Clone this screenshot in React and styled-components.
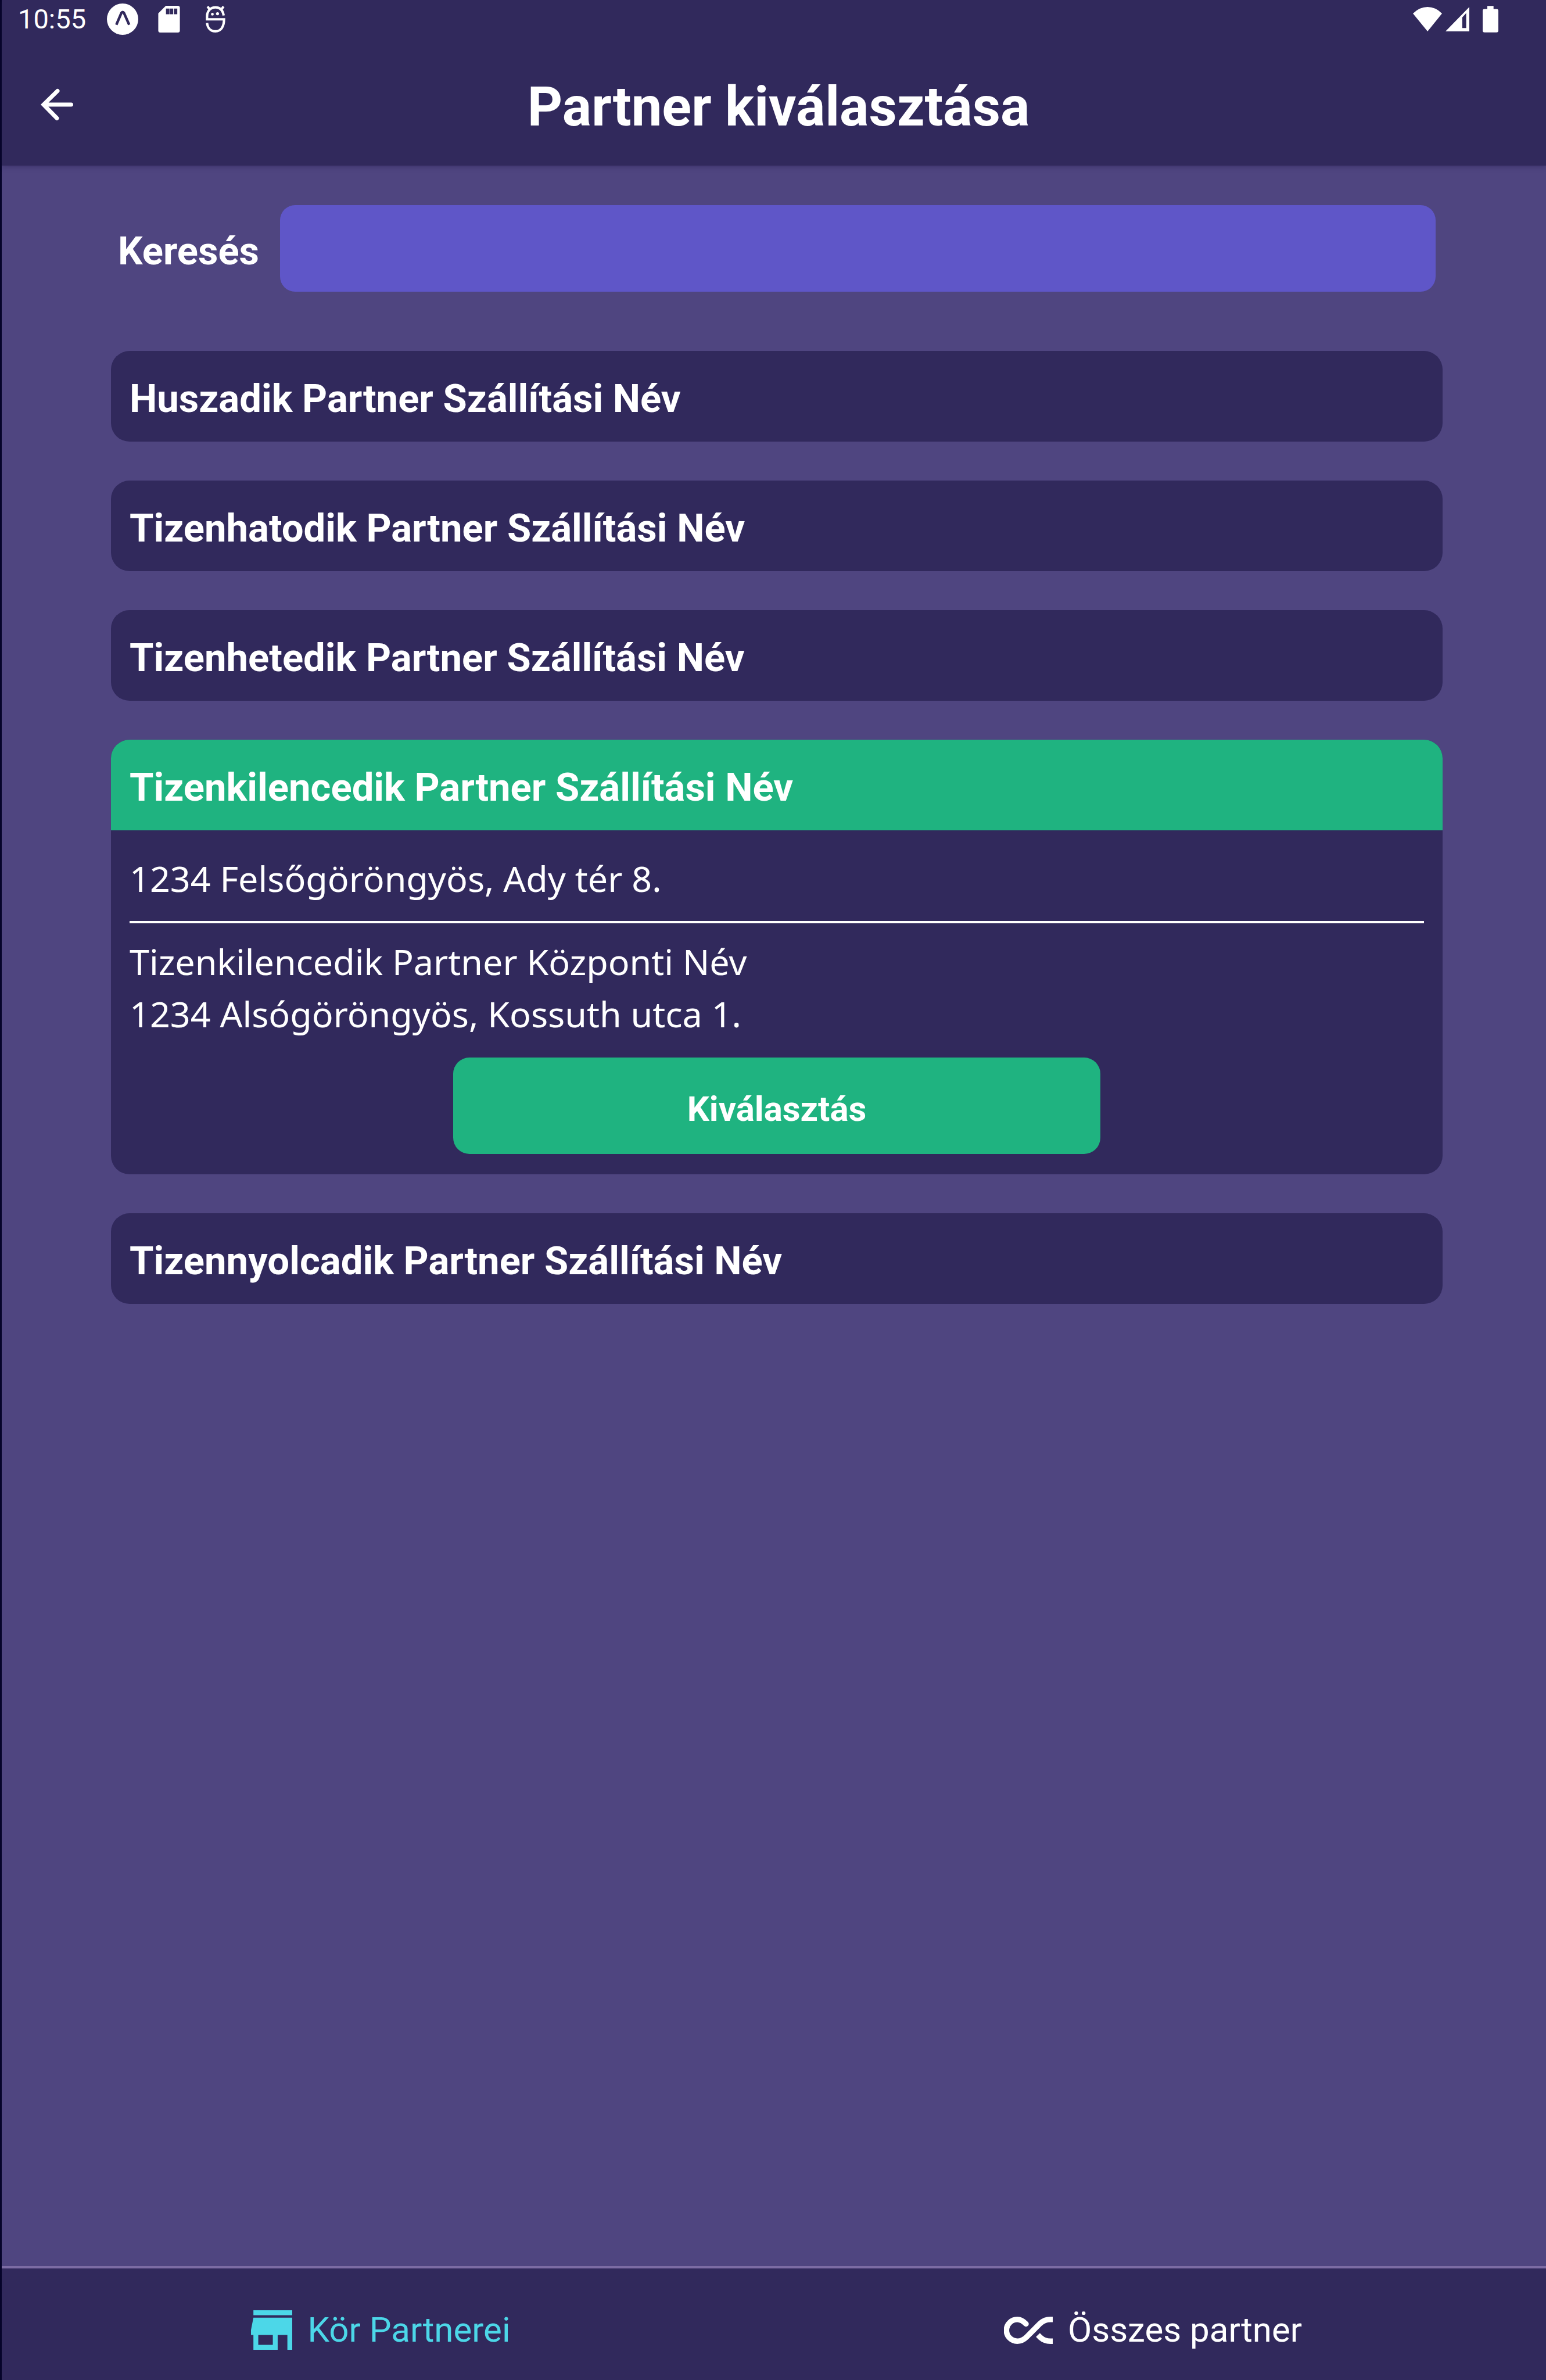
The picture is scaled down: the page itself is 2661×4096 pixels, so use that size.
import React, { useState } from 'react';
import styled, { createGlobalStyle } from 'styled-components';

const color = {
  page: '#4f4580',
  panel: '#31295c',
  field: '#5f56c8',
  green: '#1fb380',
  cyan: '#4cd7e8',
  line: '#7c6ca4',
  edge: '#06042a',
  text: '#ffffff',
};

const GlobalStyle = createGlobalStyle`
  *, *::before, *::after { box-sizing: border-box; }
  body { margin: 0; background: ${color.page}; }
  button, input { font: inherit; color: inherit; border: 0; margin: 0; padding: 0; background: none; }
`;

const Screen = styled.div`
  display: flex;
  flex-direction: column;
  min-height: 100vh;
  border-left: 3px solid ${color.edge};
  background: ${color.page};
  color: ${color.text};
  font-family: Roboto, "Liberation Sans", sans-serif;
`;

const Top = styled.header`
  background: ${color.panel};
  box-shadow: 0 2px 8px rgba(30, 20, 70, 0.35);
`;

const StatusBar = styled.div`
  display: flex;
  justify-content: space-between;
  height: 74px;
  padding: 0 82px 8px 28px;
`;

const StatusGroup = styled.div`
  display: flex;
  align-items: center;
  gap: ${(p) => p.$gap}px;
`;

const Clock = styled.time`
  margin-right: 10px;
  font-size: 47px;
  line-height: 56px;
`;

const AppBar = styled.div`
  display: grid;
  grid-template-columns: 1fr auto 1fr;
  align-items: center;
  height: 211px;
  padding: 0 46px 0 62px;
`;

const BackButton = styled.button`
  display: flex;
  justify-self: start;
  cursor: pointer;
`;

const Title = styled.h1`
  margin: 0;
  padding-top: 8px;
  font-size: 94px;
  font-weight: 700;
  line-height: 110px;
`;

const Content = styled.main`
  flex: 1;
  padding: 68px 178px 68px 188px;
`;

const SearchRow = styled.form`
  display: flex;
  align-items: center;
  gap: 36px;
  padding: 0 12px;
  margin-bottom: 102px;
`;

const SearchLabel = styled.label`
  padding-top: 8px;
  font-size: 67px;
  font-weight: 700;
  line-height: 78px;
`;

const SearchInput = styled.input`
  flex: 1;
  min-width: 0;
  height: 149px;
  padding: 0 32px;
  border-radius: 26px;
  background: ${color.field};
  font-size: 60px;
`;

const PartnerList = styled.ul`
  display: flex;
  flex-direction: column;
  gap: 67px;
  margin: 0;
  padding: 0;
  list-style: none;
`;

const PartnerCard = styled.li`
  overflow: hidden;
  border-radius: 32px;
  background: ${color.panel};
`;

const PartnerName = styled.button`
  display: block;
  width: 100%;
  padding: 43px 32px 35px;
  background: ${(p) => (p.$open ? color.green : 'transparent')};
  font-size: 67px;
  font-weight: 700;
  line-height: 78px;
  text-align: left;
  cursor: pointer;
`;

const PartnerDetails = styled.div`
  padding: 38px 32px 35px;
`;

const DetailLine = styled.p`
  margin: 0;
  font-family: "Noto Sans", "DejaVu Sans", sans-serif;
  font-size: 61px;
  line-height: 90px;
`;

const Divider = styled.hr`
  height: 4px;
  margin: 28px 0 21px;
  border: 0;
  background: ${color.text};
`;

const SelectButton = styled.button`
  display: block;
  width: 50%;
  margin: 30px auto 0;
  padding: 54px 0 42px;
  border-radius: 28px;
  background: ${color.green};
  font-size: 60px;
  font-weight: 700;
  line-height: 70px;
  cursor: pointer;
`;

const TabBar = styled.nav`
  display: flex;
  height: 196px;
  border-top: 4px solid ${color.line};
  background: ${color.panel};
`;

const Tab = styled.button`
  display: flex;
  flex: 1;
  align-items: center;
  justify-content: center;
  gap: 26px;
  padding: 20px 24px 0 0;
  color: ${(p) => (p.$active ? color.cyan : color.text)};
  font-size: 60px;
  line-height: 70px;
  cursor: pointer;
`;

const Icon = styled.svg`
  display: block;
  flex: none;
`;

const ExpoIcon = () => (
  <Icon width="54" height="54" viewBox="0 0 183 183" aria-hidden="true">
    <circle cx="91.5" cy="91.5" r="91.5" fill="#fff" />
    <path d="M55 124 L84 56 Q92 44 100 56 L130 124" fill="none" stroke={color.panel} strokeWidth="15" strokeLinejoin="round" />
  </Icon>
);

const SdCardIcon = () => (
  <Icon width="54" height="46" viewBox="0 0 126 156" aria-hidden="true">
    <path d="M44 0 H114 Q126 0 126 12 V144 Q126 156 114 156 H12 Q0 156 0 144 V44 Z" fill="#fff" />
    <path d="M45 16 h20 v33 h-20 z M67 16 h20 v33 h-20 z M91 16 h20 v33 h-20 z" fill={color.panel} />
  </Icon>
);

const DebugIcon = () => (
  <Icon width="54" height="46" viewBox="0 0 113 156" aria-hidden="true">
    <g fill="none" stroke="#fff" strokeWidth="14">
      <path d="M104 56 C98 24 80 9 56 9 C28 9 7 30 7 62 V79 H106 C106 122 88 149 56 149 C28 149 10 130 7 100" />
      <path d="M10 4 L24 24 M103 4 L89 24" />
    </g>
    <circle cx="38" cy="49" r="8" fill="#fff" />
    <circle cx="68" cy="46" r="9" fill="#fff" />
  </Icon>
);

const WifiIcon = () => (
  <Icon width="50" height="42" viewBox="0 0 169 142" aria-hidden="true">
    <path d="M85 142 L0 38 Q38 0 85 0 Q132 0 169 38 Z" fill="#fff" />
  </Icon>
);

const SignalIcon = () => (
  <Icon width="41" height="42" viewBox="0 0 138 141" aria-hidden="true">
    <path fillRule="evenodd" d="M138 0 V141 H0 Z M120 35 L97 60 V122 H120 Z" fill="#fff" />
  </Icon>
);

const BatteryIcon = () => (
  <Icon width="27" height="46" viewBox="0 0 91 154" aria-hidden="true">
    <path d="M27 0 H63 V18 H80 Q91 18 91 29 V143 Q91 154 80 154 H11 Q0 154 0 143 V29 Q0 18 11 18 H27 Z" fill="#fff" />
  </Icon>
);

const BackIcon = () => (
  <Icon width="62" height="62" viewBox="0 0 62 62" aria-hidden="true">
    <path d="M34 7.5 L10 31 L33 54.5 M11 31 H57.5" fill="none" stroke="#fff" strokeWidth="7" strokeLinecap="round" strokeLinejoin="miter" />
  </Icon>
);

const StoreIcon = () => (
  <Icon width="71" height="68" viewBox="3 4 17 16" preserveAspectRatio="none" aria-hidden="true">
    <path
      d="M20 4H4v2h16V4zm1 10v-2l-1-5H4l-1 5v2h1v6h10v-6h4v6h2v-6h1zm-9 4H6v-4h6v4z"
      fill="currentColor"
    />
  </Icon>
);

const InfinityIcon = () => (
  <Icon width="84" height="47" viewBox="0 0 84 47" aria-hidden="true">
    <g fill="none" stroke="currentColor" strokeWidth="9.5">
      <path d="M38 12.5 C33 7.5 28.5 4.8 23 4.8 A18.2 18.2 0 0 0 23 42.2 C30 42.2 35 39 39 35 L62 12 C68 6.5 74 4.8 80 4.8 H92" strokeLinecap="round" />
      <path d="M58.5 31.5 L63 36 C68 40.5 74 42.2 80 42.2 H92" />
    </g>
  </Icon>
);

const partners = [
  { id: 20, name: 'Huszadik Partner Szállítási Név' },
  { id: 16, name: 'Tizenhatodik Partner Szállítási Név' },
  { id: 17, name: 'Tizenhetedik Partner Szállítási Név' },
  {
    id: 19,
    name: 'Tizenkilencedik Partner Szállítási Név',
    delivery: '1234 Felsőgöröngyös, Ady tér 8.',
    central: ['Tizenkilencedik Partner Központi Név', '1234 Alsógöröngyös, Kossuth utca 1.'],
  },
  { id: 18, name: 'Tizennyolcadik Partner Szállítási Név' },
];

const tabs = [
  { id: 'round', label: 'Kör Partnerei', TabIcon: StoreIcon },
  { id: 'all', label: 'Összes partner', TabIcon: InfinityIcon },
];

function Partner({ partner, open, onToggle }) {
  return (
    <PartnerCard>
      <PartnerName type="button" $open={open} aria-expanded={open} onClick={onToggle}>
        {partner.name}
      </PartnerName>
      {open && partner.delivery && (
        <PartnerDetails>
          <DetailLine>{partner.delivery}</DetailLine>
          <Divider />
          {partner.central.map((line) => (
            <DetailLine key={line}>{line}</DetailLine>
          ))}
          <SelectButton type="button">Kiválasztás</SelectButton>
        </PartnerDetails>
      )}
    </PartnerCard>
  );
}

export default function App() {
  const [openId, setOpenId] = useState(19);
  const [tab, setTab] = useState('round');
  const [query, setQuery] = useState('');
  const shown = partners.filter((p) => p.name.toLowerCase().includes(query.toLowerCase()));

  return (
    <Screen>
      <GlobalStyle />
      <Top>
        <StatusBar>
          <StatusGroup $gap={26}>
            <Clock>10:55</Clock>
            <ExpoIcon />
            <SdCardIcon />
            <DebugIcon />
          </StatusGroup>
          <StatusGroup $gap={23}>
            <StatusGroup $gap={6}>
              <WifiIcon />
              <SignalIcon />
            </StatusGroup>
            <BatteryIcon />
          </StatusGroup>
        </StatusBar>
        <AppBar>
          <BackButton type="button" aria-label="Vissza">
            <BackIcon />
          </BackButton>
          <Title>Partner kiválasztása</Title>
        </AppBar>
      </Top>
      <Content>
        <SearchRow onSubmit={(e) => e.preventDefault()}>
          <SearchLabel htmlFor="search">Keresés</SearchLabel>
          <SearchInput id="search" type="text" value={query} onChange={(e) => setQuery(e.target.value)} />
        </SearchRow>
        <PartnerList>
          {shown.map((p) => (
            <Partner
              key={p.id}
              partner={p}
              open={p.id === openId}
              onToggle={() => setOpenId(p.id === openId ? null : p.id)}
            />
          ))}
        </PartnerList>
      </Content>
      <TabBar>
        {tabs.map(({ id, label, TabIcon }) => (
          <Tab key={id} type="button" $active={id === tab} onClick={() => setTab(id)}>
            <TabIcon />
            {label}
          </Tab>
        ))}
      </TabBar>
    </Screen>
  );
}
